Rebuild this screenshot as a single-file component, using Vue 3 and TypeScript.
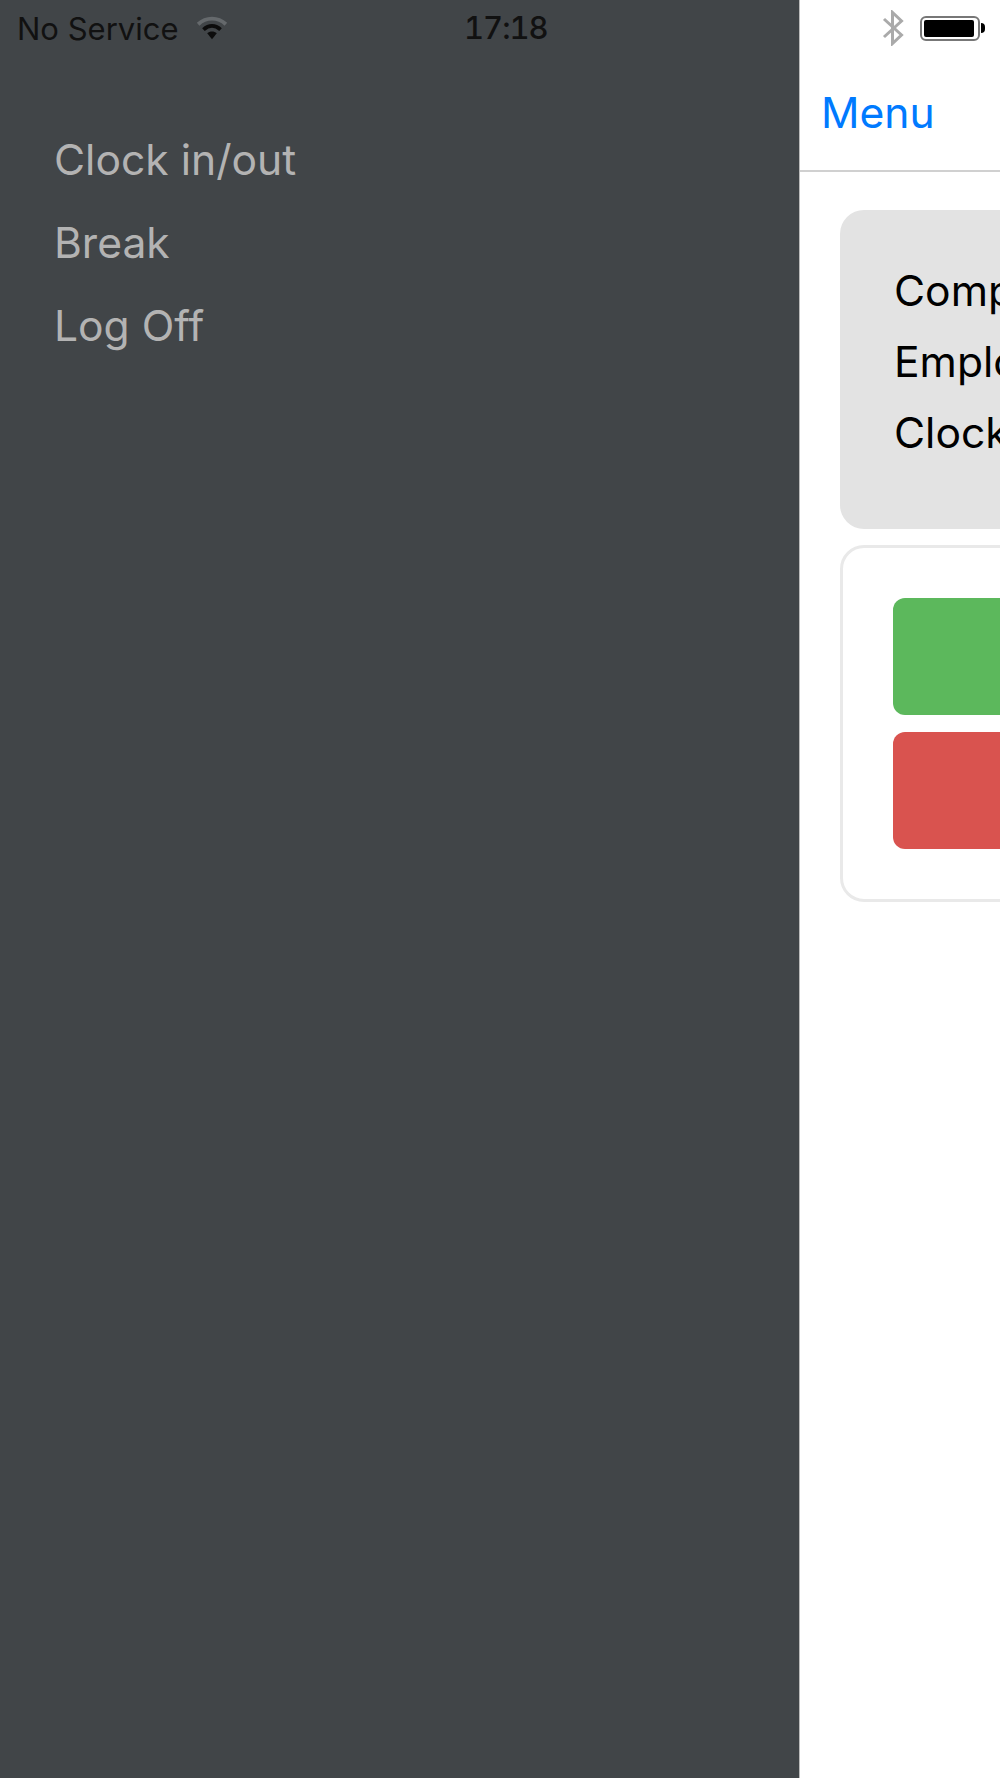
<script setup lang="ts">
const menuItems: string[] = ['Clock in/out', 'Break', 'Log Off']
const infoRows: string[] = ['Company: Acme', 'Employee: Jane Smith', 'Clocked in: No']
</script>

<template>
  <div class="screen">
    <aside class="side">
      <div class="side-status">
        <span class="carrier">No Service</span>
        <svg class="wifi" width="32" height="26" viewBox="0 0 30 24">
          <path d="M2 8.500C9.500 1.500 20.500 1.500 28 8.500" fill="none" stroke="#65696c" stroke-width="3.6" />
          <path d="M7 13.500C12 9 18 9 23 13.500" fill="none" stroke="#0c0c0c" stroke-width="3.6" />
          <path d="M10.500 17L15 22.500L19.500 17C17 14.800 13 14.800 10.500 17Z" fill="#0c0c0c" />
        </svg>
        <span class="time">17:18</span>
      </div>
      <nav class="side-menu">
        <a v-for="item in menuItems" :key="item" class="side-link">{{ item }}</a>
      </nav>
    </aside>
    <main class="main">
      <div class="main-status">
        <svg class="bt" width="22" height="36" viewBox="0 0 22 36">
          <path d="M2 9L19.500 25L10.500 33.500V2.500L19.500 11L2 27" fill="none" stroke="#aaa" stroke-width="3" />
        </svg>
        <div class="battery"><div class="battery-fill"></div></div>
        <div class="battery-cap"></div>
      </div>
      <header class="nav"><a class="nav-link">Menu</a></header>
      <div class="content">
        <section class="info">
          <p v-for="row in infoRows" :key="row" class="info-row">{{ row }}</p>
        </section>
        <section class="actions">
          <button class="action in" type="button"></button>
          <button class="action out" type="button"></button>
        </section>
      </div>
    </main>
  </div>
</template>

<style>
html, body { margin: 0; background: #fff; }
</style>

<style scoped>
.screen { display: flex; width: 1000px; height: 1778px; overflow: hidden; font-family: Inter, "Noto Sans", sans-serif; }
.side { width: 799px; flex: none; background: #414548; box-sizing: border-box; }
.side-status { display: flex; align-items: center; height: 56px; padding-left: 17px; color: #111; font-size: 31px; position: relative; }
.carrier { width: 179px; }
.time { position: absolute; left: 464px; top: 9px; line-height: 38px; font-size: 31px; letter-spacing: -1px; font-weight: 500; font-variant-numeric: tabular-nums; }
.side-menu { display: flex; flex-direction: column; padding: 62px 0 0 54px; }
.side-link { font-size: 42.600px; line-height: 83px; color: #b3b3b3; }
.main { width: 201px; flex: none; overflow: hidden; border-left: 1px solid #bbb; box-sizing: border-box; }
.main-status { display: flex; align-items: center; height: 56px; padding-left: 82px; }
.battery { width: 60px; height: 25px; box-sizing: border-box; margin-left: 16px; padding: 2px 4px 2px 2px; border: 2px solid #777; border-radius: 6px; flex: none; }
.battery-fill { height: 100%; background: #000; border-radius: 2px; }
.battery-cap { width: 4px; height: 10px; background: #000; border-radius: 0 4px 4px 0; flex: none; margin-left: 1px; }
.nav { height: 116px; border-bottom: 2px solid #d0d0d0; display: flex; align-items: center; padding-left: 21px; box-sizing: border-box; }
.nav-link { color: #007aff; font-size: 42.600px; margin-top: -2px; }
.content { width: 900px; padding: 38px 0 0 40px; }
.info { background: #e3e3e3; border-radius: 24px; height: 319px; box-sizing: border-box; padding: 45px 54px; }
.info-row { margin: 0; color: #000; font-size: 42.600px; line-height: 71px; white-space: nowrap; }
.actions { margin-top: 16px; height: 357px; box-sizing: border-box; border: 3px solid #e9e9e9; border-radius: 24px; padding: 50px; display: flex; flex-direction: column; gap: 17px; }
.action { display: block; height: 117px; border: 0; border-radius: 12px; padding: 0; }
.in { background: #5cb85c; }
.out { background: #d9534f; }
</style>
